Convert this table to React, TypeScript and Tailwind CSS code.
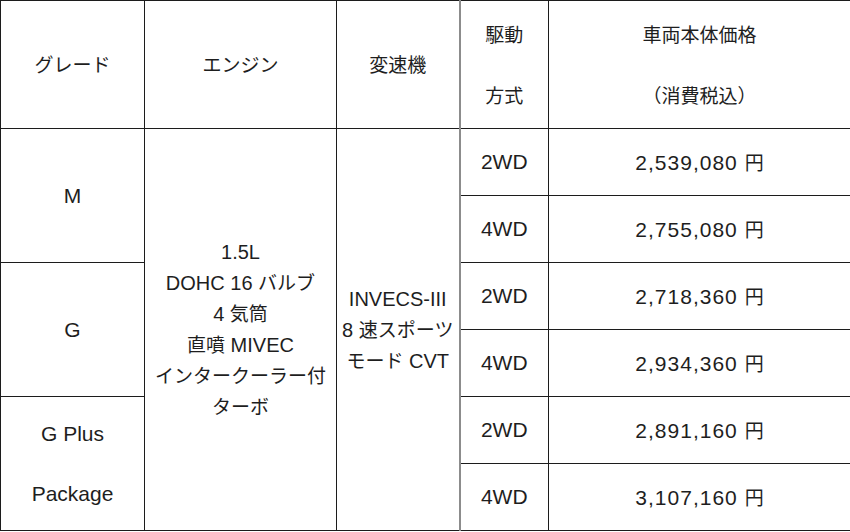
import type { ReactNode } from "react";

const rows = [
  { drive: "2WD", price: "2,539,080" },
  { drive: "4WD", price: "2,755,080" },
  { drive: "2WD", price: "2,718,360" },
  { drive: "4WD", price: "2,934,360" },
  { drive: "2WD", price: "2,891,160" },
  { drive: "4WD", price: "3,107,160" },
];

// Latin runs are set larger (Arial-like), Japanese runs a bit smaller
function T({ children }: { children: string }) {
  const parts = children.split(/([\u3000-\u30ff\u4e00-\u9fff\uff00-\uffef]+)/);
  return (
    <>
      {parts.map((p, i) =>
        /[\u3000-\u30ff\u4e00-\u9fff\uff00-\uffef]/.test(p) ? (
          <span key={i} className="text-[19px] tracking-normal font-['Noto_Sans_CJK_JP',sans-serif]">
            {p}
          </span>
        ) : (
          <span key={i}>{p}</span>
        ),
      )}
    </>
  );
}

const cell = "border border-[#1c1c1c] text-center align-middle p-0";
const driveCell = "border border-[#1c1c1c] border-l-2 border-l-[#8c8c8c] text-center align-middle p-0";

const grades: Record<number, { rows: number; label: ReactNode }> = {
  0: { rows: 2, label: <span className="leading-[30px]">M</span> },
  2: { rows: 2, label: <span className="leading-[30px]">G</span> },
  4: {
    rows: 2,
    label: (
      <div className="flex flex-col leading-[60px]">
        <span>G Plus</span>
        <span>Package</span>
      </div>
    ),
  },
};

export default function App() {
  return (
    <div className="w-[850px] h-[532px] bg-white text-[#1e1e1e] text-[21px] font-['Liberation_Sans','Noto_Sans_CJK_JP',sans-serif]">
      <table className="w-[850px] table-fixed border-collapse">
        <colgroup>
          <col className="w-[144px]" />
          <col className="w-[192px]" />
          <col className="w-[123px]" />
          <col className="w-[89px]" />
          <col className="w-[302px]" />
        </colgroup>
        <thead>
          <tr className="h-[128px]">
            <th className={`${cell} font-normal`}>
              <T>グレード</T>
            </th>
            <th className={`${cell} font-normal`}>
              <T>エンジン</T>
            </th>
            <th className={`${cell} font-normal`}>
              <T>変速機</T>
            </th>
            <th className={`${driveCell} font-normal`}>
              <div className="flex flex-col leading-[60px]">
                <span><T>駆動</T></span>
                <span><T>方式</T></span>
              </div>
            </th>
            <th className={`${cell} font-normal`}>
              <div className="flex flex-col leading-[60px]">
                <span><T>車両本体価格</T></span>
                <span><T>（消費税込）</T></span>
              </div>
            </th>
          </tr>
        </thead>
        <tbody>
          {rows.map((r, i) => (
            <tr key={i} className="h-[67px]">
              {grades[i] && (
                <td rowSpan={grades[i].rows} className={cell}>
                  {grades[i].label}
                </td>
              )}
              {i === 0 && (
                <>
                  <td rowSpan={6} className={`${cell} text-[20px]`}>
                    <div className="flex flex-col leading-[30px]">
                      <span>1.5L</span>
                      <span><T>DOHC 16 バルブ</T></span>
                      <span><T>4 気筒</T></span>
                      <span><T>直噴 MIVEC</T></span>
                      <span><T>インタークーラー付</T></span>
                      <span><T>ターボ</T></span>
                    </div>
                  </td>
                  <td rowSpan={6} className={`${cell} text-[20px]`}>
                    <div className="flex flex-col leading-[30px]">
                      <span>INVECS-III</span>
                      <span><T>8 速スポーツ</T></span>
                      <span><T>モード CVT</T></span>
                    </div>
                  </td>
                </>
              )}
              <td className={`${driveCell} leading-[30px]`}>{r.drive}</td>
              <td className={`${cell} leading-[30px] tracking-[1px]`}>
                <T>{`${r.price} 円`}</T>
              </td>
            </tr>
          ))}
        </tbody>
      </table>
    </div>
  );
}
